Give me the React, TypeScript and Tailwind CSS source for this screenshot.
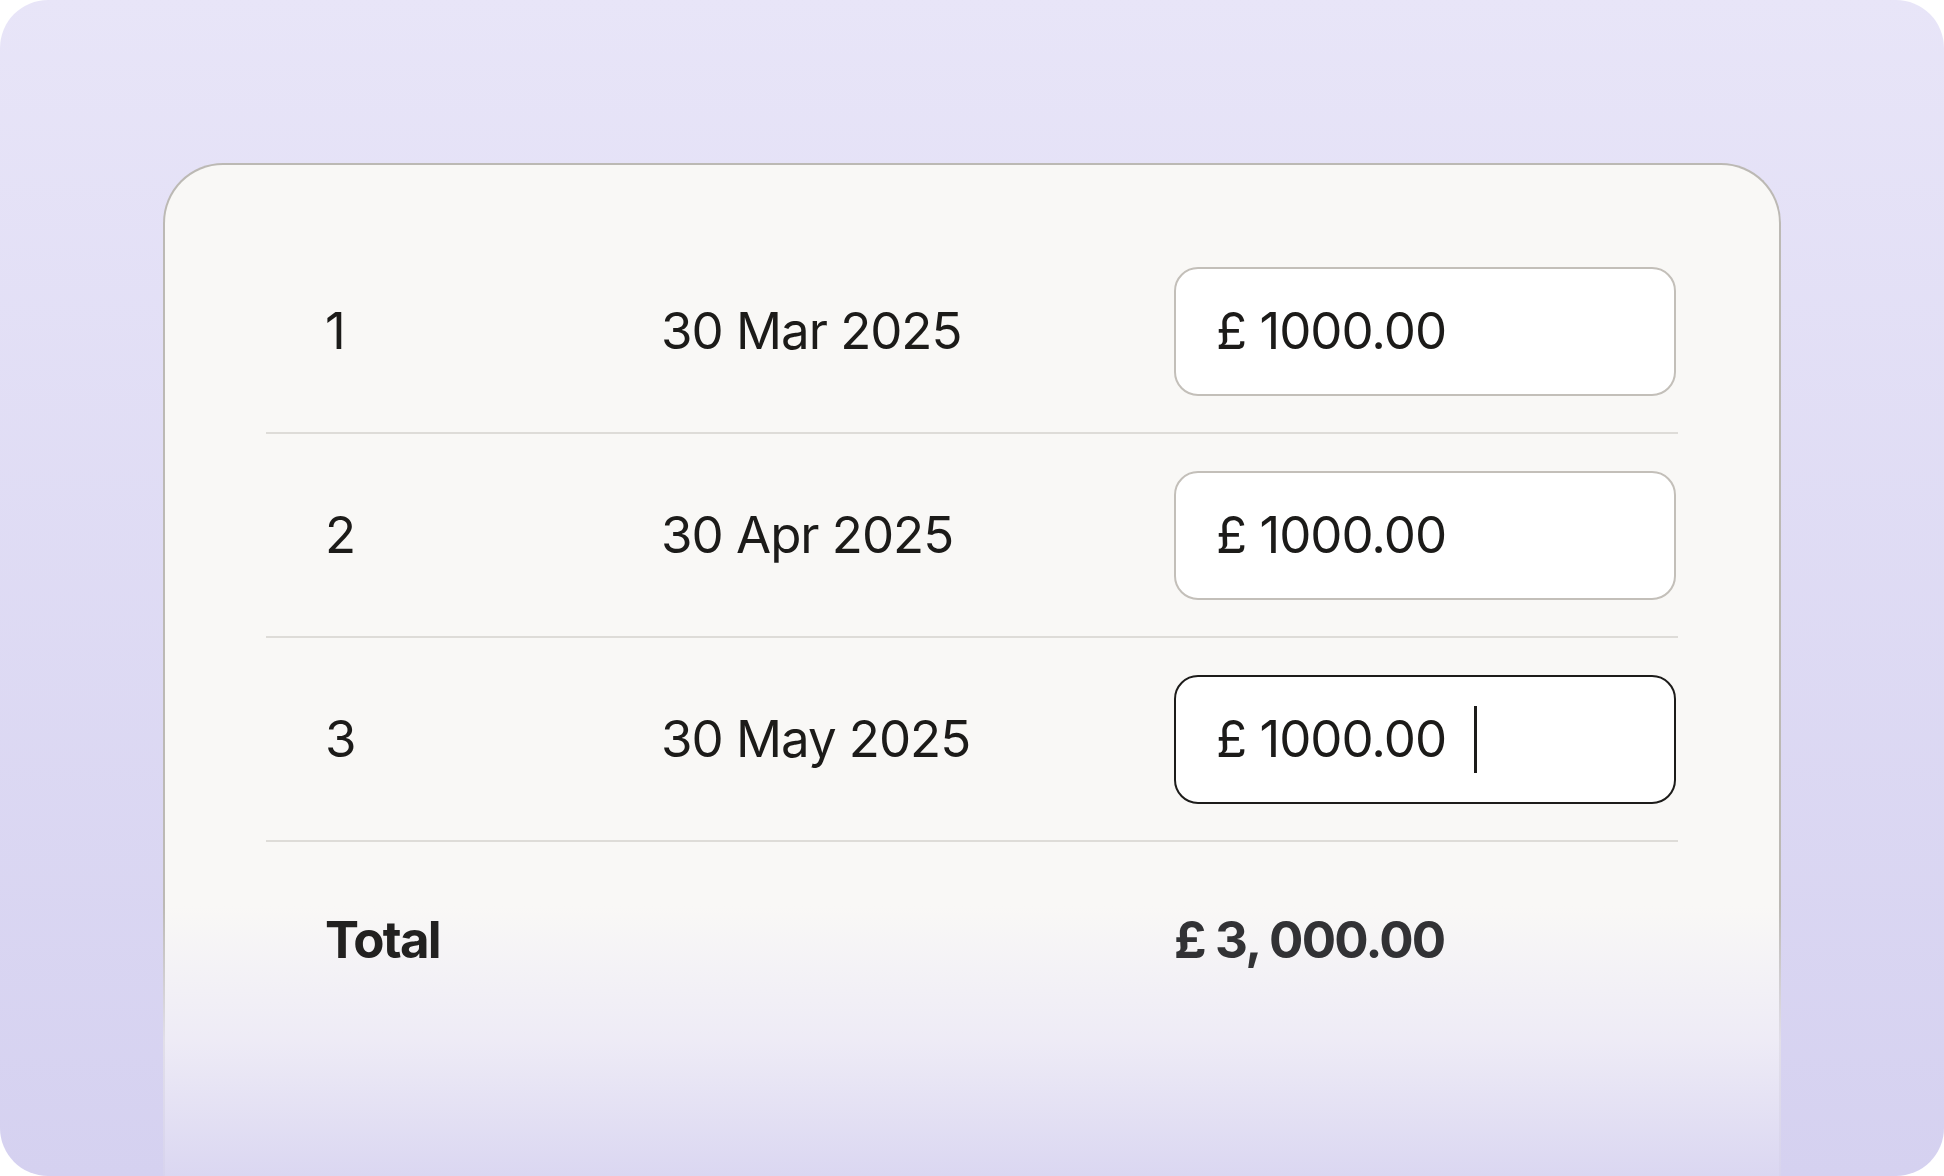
const rows = [
  { n: '1', date: '30 Mar 2025', amount: '1000.00', active: false },
  { n: '2', date: '30 Apr 2025', amount: '1000.00', active: false },
  { n: '3', date: '30 May 2025', amount: '1000.00', active: true },
];

const AmountInput = ({ amount, active }: { amount: string; active: boolean }) => (
  <div
    className={`flex h-[129px] w-[502px] items-center rounded-[24px] border-2 bg-white pl-[40px] ${
      active ? 'border-[#1d1c1a]' : 'border-[#c3bfb9]'
    }`}
  >
    <span>£ {amount}</span>
    {active && <span className="ml-[28px] h-[67px] w-[3px] bg-[#1d1c1a]" />}
  </div>
);

const App = () => {
  return (
    <div
      className="h-[1176px] w-[1944px] bg-white"
      style={{ fontFamily: 'Inter, "Noto Sans", sans-serif' }}
    >
      <div className="h-full overflow-hidden rounded-[48px] bg-linear-to-b from-[#e8e5f8] to-[#d5d1f0] px-[163px] pt-[163px]">
        <div className="relative h-full rounded-t-[60px] border-2 border-b-0 border-[#bcb9b4] bg-[#f9f8f6] px-[101px] pt-[65px] text-[51px] tracking-[-0.02em] text-[#1c1b19]">
          {rows.map((r) => (
            <div
              key={r.n}
              className="flex h-[204px] items-center border-b-2 border-[#dedcd8] pl-[59px]"
            >
              <span className="w-[336px]">{r.n}</span>
              <span className="w-[513px]">{r.date}</span>
              <AmountInput amount={r.amount} active={r.active} />
            </div>
          ))}

          <div className="relative z-10 flex h-[196px] items-center pl-[59px] font-bold tracking-[-0.035em] text-[#222120]">
            <span className="w-[849px]">Total</span>
            <span className="text-[#323235]">£ 3, 000.00</span>
          </div>

          {/* soft fade where the card runs off the bottom */}
          <div className="absolute -left-[2px] -right-[2px] bottom-0 h-[270px] bg-linear-to-b from-[#f9f8f6]/0 via-[#ebe8f6]/80 to-[#d9d5f1]/95" />
        </div>
      </div>
    </div>
  );
};

export default App;
